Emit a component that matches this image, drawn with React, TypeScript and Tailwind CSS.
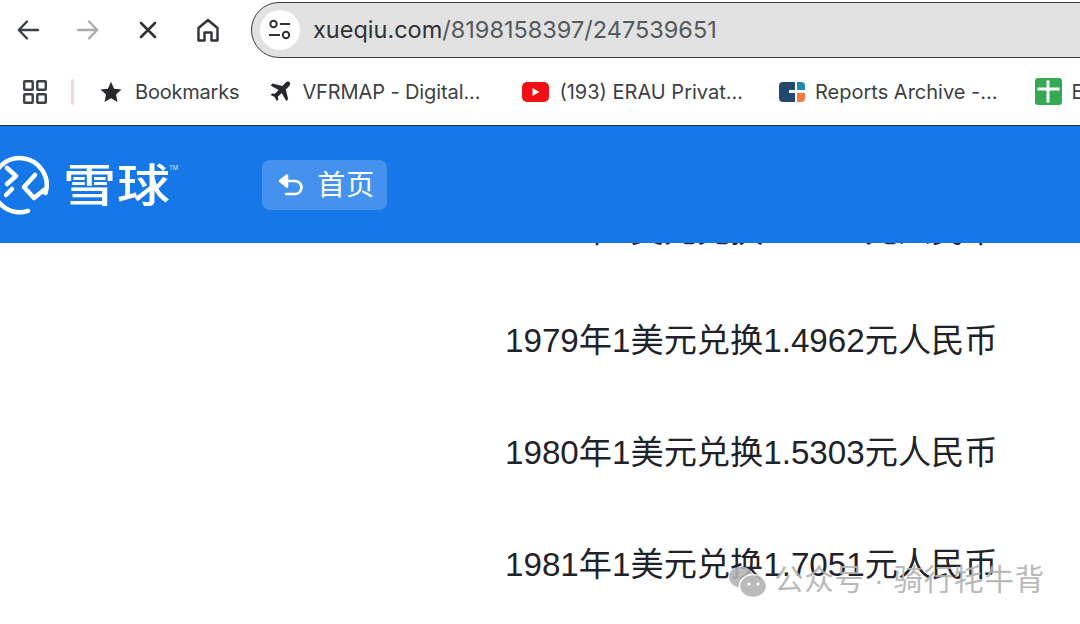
import React from "react";

const UI = { fontFamily: 'Inter, "Noto Sans CJK SC", sans-serif' };
const CJK = { fontFamily: '"Liberation Sans", "Noto Sans CJK SC", sans-serif' };

function Nav({ children, className = "" }: { children: React.ReactNode; className?: string }) {
  return <div className={"flex h-[30px] w-[30px] items-center justify-center " + className}>{children}</div>;
}

function Bookmark({ icon, label, className = "", labelClass = "" }: { icon: React.ReactNode; label: string; className?: string; labelClass?: string }) {
  return (
    <div className={"flex shrink-0 items-center " + className}>
      {icon}
      <span className={"whitespace-nowrap text-[20px] leading-none text-[#3c3f43] " + labelClass}>{label}</span>
    </div>
  );
}

const lines = [
  "1978年1美元兑换1.6836元人民币",
  "1979年1美元兑换1.4962元人民币",
  "1980年1美元兑换1.5303元人民币",
  "1981年1美元兑换1.7051元人民币",
];

export default function App() {
  return (
    <div className="relative h-[624px] w-[1080px] overflow-hidden bg-white" style={UI}>
      <div className="flex h-[60px] items-center">
        <Nav className="ml-[13px]">
          <svg width="26" height="26" viewBox="0 0 26 26" fill="none" stroke="#3c4043" strokeWidth="2.4" strokeLinecap="round" strokeLinejoin="round"><path d="M23 13H4M12 4.500 3.800 13l8.200 8.500" /></svg>
        </Nav>
        <Nav className="ml-[30px]">
          <svg width="26" height="26" viewBox="0 0 26 26" fill="none" stroke="#a9abad" strokeWidth="2.4" strokeLinecap="round" strokeLinejoin="round"><path d="M3 13h19M14 4.500 22.200 13 14 21.500" /></svg>
        </Nav>
        <Nav className="ml-[30px]">
          <svg width="20" height="20" viewBox="0 0 20 20" fill="none" stroke="#303236" strokeWidth="2.600" strokeLinecap="round"><path d="M3 3l14 14M17 3 3 17" /></svg>
        </Nav>
        <Nav className="ml-[30px]">
          <svg width="24" height="26" viewBox="0 0 24 26" fill="none" stroke="#303236" strokeWidth="2.400" strokeLinejoin="round"><path d="M2.500 11 12 3l9.500 8v12.500h-6v-8h-7v8h-6z" /></svg>
        </Nav>
        <div className="ml-[28px] mr-[-60px] flex h-[56px] flex-1 items-center rounded-full border-[1.5px] border-[#3a3c3f] bg-[#e2e2e2] pl-[8px]">
          <div className="flex h-[40px] w-[40px] items-center justify-center rounded-full bg-white">
            <svg width="24" height="22" viewBox="0 0 24 22" fill="none" stroke="#303236" strokeWidth="2"><circle cx="5.500" cy="5" r="3.200" /><path d="M12 5h10M1 16h11" /><circle cx="18" cy="16" r="3.200" /></svg>
          </div>
          <span className="ml-[13px] whitespace-nowrap text-[23.500px] leading-none">
            <span className="text-[#303236]">xueqiu.com</span>
            <span className="text-[#56595d]">/8198158397/247539651</span>
          </span>
        </div>
      </div>

      <div className="flex h-[65px] items-center overflow-hidden pb-[2px]">
        <svg className="ml-[23px] shrink-0" width="24" height="24" viewBox="0 0 24 24" fill="none" stroke="#3c3f43" strokeWidth="2.400"><rect x="1.200" y="1.200" width="8.500" height="8.500" rx="0.800" /><rect x="14.300" y="1.200" width="8.500" height="8.500" rx="0.800" /><rect x="1.200" y="14.300" width="8.500" height="8.500" rx="0.800" /><rect x="14.300" y="14.300" width="8.500" height="8.500" rx="0.800" /></svg>
        <div className="ml-[24px] h-[26px] w-[3px] shrink-0 rounded-full bg-[#f8d3e1]" />
        <Bookmark
          className="ml-[26px]"
          label="Bookmarks"
          labelClass="tracking-[-0.2px]"
          icon={<svg className="mr-[13px]" width="22" height="22" viewBox="0 0 22 22" fill="#26282b"><path d="M11 .8l3.100 6.900 7.400.8-5.500 5 1.500 7.400L11 17.200l-6.500 3.700L6 13.500.5 8.500l7.400-.8z" /></svg>}
        />
        <Bookmark
          className="ml-[30px]"
          label="VFRMAP - Digital..."
          labelClass="tracking-[-0.1px]"
          icon={<svg className="mr-[11px]" width="22" height="22" viewBox="0 0 22 22" fill="#26282b"><path d="M20.800 1.200c-1.200-1.100-3.200-.6-4.500.7l-3 3L3.500 2.500 1.600 4.400l8 4.600-3.700 3.800-2.800-.4-1.500 1.500 4 2.200 2.200 4 1.500-1.500-.4-2.800 3.800-3.700 4.600 8 1.900-1.900-2.400-9.800 3-3c1.300-1.300 1.700-3.100 1-4.200z" /></svg>}
        />
        <Bookmark
          className="ml-[42px]"
          label="(193) ERAU Privat..."
          icon={<svg className="mr-[10px]" width="27" height="20" viewBox="0 0 27 20"><rect width="27" height="20" rx="5" fill="#ef0f14" /><path d="M10.500 6l7 4-7 4z" fill="#fff" /></svg>}
        />
        <Bookmark
          className="ml-[36px]"
          label="Reports Archive -..."
          icon={<svg className="mr-[10px]" width="26" height="20" viewBox="0 0 26 20"><path d="M4 0h12v8h-6v3h6v9H4a4 4 0 0 1-4-4V4a4 4 0 0 1 4-4z" fill="#21486d" /><path d="M18 0h4a4 4 0 0 1 4 4v4h-8z" fill="#1c86b5" /><path d="M18 11h8v5a4 4 0 0 1-4 4h-4z" fill="#f47a3b" /></svg>}
        />
        <Bookmark
          className="ml-[37px]"
          label="E"
          icon={<svg className="mr-[10px]" width="27" height="27" viewBox="0 0 27 27"><rect width="27" height="27" rx="3" fill="#34a853" /><path d="M11.500 2.500h3V9.500h10v3h-10v12h-3v-12h-9v-3h9z" fill="#fff" /></svg>}
        />
      </div>

      <div className="relative z-10 flex h-[118px] items-center border-t border-[#2a2c30] bg-[#1677e9]">
        <svg className="ml-[-10px] shrink-0" width="60" height="60" viewBox="0 0 60 60" fill="none" stroke="#fff" strokeWidth="4.500" strokeLinecap="round" strokeLinejoin="round">
          <path d="M38 55.800A27 27 0 1 1 55.500 38" />
          <path d="M17 13l9 8-9 8M16 40l6-6" />
          <path d="M45 20 34 32l10 11 10-8" />
        </svg>
        <span className="ml-[13px] mt-[3px] scale-y-[0.86] text-[53px] font-medium leading-none tracking-[1px] text-white" style={CJK}>雪球</span>
        <span className="mb-[34px] ml-[-2px] text-[6px] leading-none text-white/80">TM</span>
        <div className="ml-[84px] flex h-[50px] w-[125px] items-center rounded-[8px] bg-white/20 pl-[15px]">
          <svg width="28" height="26" viewBox="0 0 28 26" fill="none" stroke="#fff" strokeWidth="2.600" strokeLinecap="round" strokeLinejoin="round">
            <path d="M4 9h14a6.500 6.500 0 0 1 0 13H9" />
            <path d="M10 3.500 3 9l7 5.500z" fill="#fff" />
          </svg>
          <span className="ml-[12px] mt-[3px] text-[28px] leading-none tracking-[1px] text-white" style={CJK}>首页</span>
        </div>
      </div>

      <div className="mt-[-34px] flex flex-col gap-[72px] pl-[505px]" style={CJK}>
        {lines.map((l) => (
          <p key={l} className="h-[40px] whitespace-nowrap text-[33.200px] leading-[40px] text-[#1f2329] first:translate-y-[2px]">{l}</p>
        ))}
      </div>

      <div className="absolute left-[728px] top-[563px] flex items-center opacity-90">
        <svg width="40" height="38" viewBox="0 0 40 38" fill="#b4b4b4">
          <ellipse cx="13" cy="14" rx="12" ry="10.500" />
          <ellipse cx="25" cy="23" rx="13.500" ry="11.500" stroke="#fff" strokeWidth="1.500" />
          <circle cx="21" cy="21" r="1.600" fill="#fff" />
          <circle cx="30" cy="21" r="1.600" fill="#fff" />
        </svg>
        <span className="mb-[4px] ml-[6px] whitespace-nowrap text-[29.500px] leading-none tracking-[0.8px] text-[#b2b2b2]" style={CJK}>公众号 · 骑行牦牛背</span>
      </div>
    </div>
  );
}
